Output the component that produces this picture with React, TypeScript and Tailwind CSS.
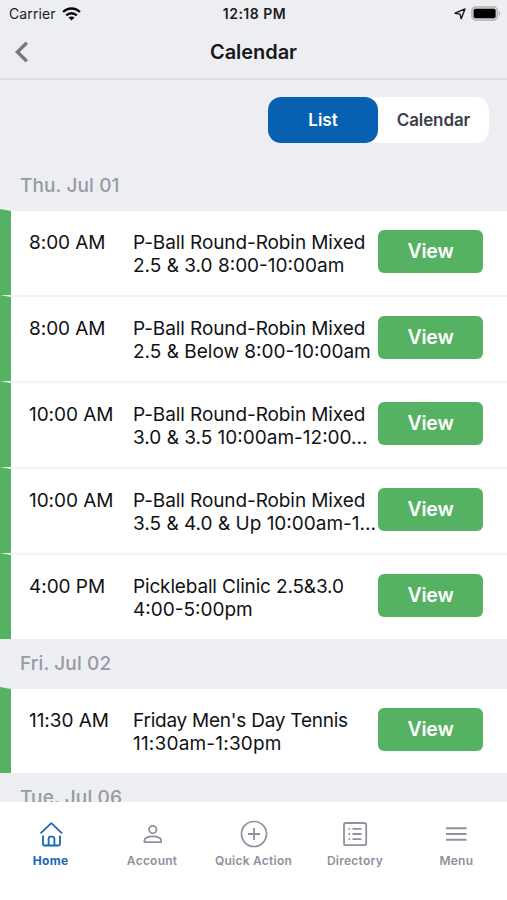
import type { ReactNode } from "react";

type EventLine = { text: string; tracking: string };
type Event = { time: string; lines: EventLine[] };
type Day = { label: string; events: Event[] };

const TIGHT = "tracking-[-0.09px]";
const TIGHTER = "tracking-[-0.16px]";
const TIGHTEST = "tracking-[-0.24px]";
const NORMAL = "tracking-normal";
const WIDE = "tracking-[0.2px]";

const MIXED: EventLine = { text: "P-Ball Round-Robin Mixed", tracking: TIGHT };

const DAYS: Day[] = [
  {
    label: "Thu. Jul 01",
    events: [
      { time: "8:00 AM", lines: [MIXED, { text: "2.5 & 3.0 8:00-10:00am", tracking: NORMAL }] },
      { time: "8:00 AM", lines: [MIXED, { text: "2.5 & Below 8:00-10:00am", tracking: NORMAL }] },
      { time: "10:00 AM", lines: [MIXED, { text: "3.0 & 3.5 10:00am-12:00...", tracking: NORMAL }] },
      { time: "10:00 AM", lines: [MIXED, { text: "3.5 & 4.0 & Up 10:00am-1...", tracking: NORMAL }] },
      {
        time: "4:00 PM",
        lines: [
          { text: "Pickleball Clinic 2.5&3.0", tracking: TIGHTER },
          { text: "4:00-5:00pm", tracking: NORMAL },
        ],
      },
    ],
  },
  {
    label: "Fri. Jul 02",
    events: [
      {
        time: "11:30 AM",
        lines: [
          { text: "Friday Men's Day Tennis", tracking: TIGHTEST },
          { text: "11:30am-1:30pm", tracking: WIDE },
        ],
      },
    ],
  },
  { label: "Tue. Jul 06", events: [] },
];

function StatusBar() {
  return (
    <div className="grid h-[27px] grid-cols-3 items-center pl-[9px] pr-[6px] text-[14px] text-[#1c1c1e]">
      <div className="flex items-center gap-[6px]">
        <span className="tracking-[0.1px]">Carrier</span>
        <svg width="19" height="14" viewBox="0 0 19 14" fill="none" stroke="#08080a" strokeWidth="2.4">
          <path d="M1.1 5C5.8.3 13.2.3 17.9 5" />
          <path d="M4.2 8.4c3-2.9 7.6-2.9 10.6 0" />
          <path d="M9.5 13.4 6.5 10.5c1.7-1.5 4.3-1.5 6 0z" fill="#08080a" stroke="none" />
        </svg>
      </div>
      <div className="pr-px pb-px text-center text-[14px] font-semibold tracking-[0.5px] whitespace-nowrap">
        12:18 PM
      </div>
      <div className="flex items-center justify-end gap-[5px]">
        <svg width="12" height="12" viewBox="0 0 12 12" fill="none" stroke="#1c1c1e" strokeWidth="1.4" strokeLinejoin="round">
          <path d="M11 1 7.2 10.7 6 6.1 1 5.2z" />
        </svg>
        <svg width="30" height="15" viewBox="0 0 30 15">
          <rect x="0.8" y="0.8" width="25.6" height="13.4" rx="4" fill="#d5d5d5" stroke="#b0b0b2" strokeWidth="1.2" />
          <rect x="2.6" y="2.8" width="22" height="9.4" rx="1.8" fill="#000" />
          <path d="M27.8 5.2c1.8.6 1.8 4 0 4.6z" fill="#b0b0b2" />
        </svg>
      </div>
    </div>
  );
}

function NavBar() {
  return (
    <header className="grid h-[53px] grid-cols-[60px_1fr_60px] items-center border-b-2 border-[#dfe0e3] pb-px">
      <svg className="ml-[14px]" width="16" height="24" viewBox="0 0 16 24" fill="none" stroke="#77787b" strokeWidth="3.4">
        <path d="M12.8 2.7 3.4 12l9.4 9.3" />
      </svg>
      <h1 className="text-center text-[20px] font-semibold tracking-[-0.05px] text-[#17181a]">Calendar</h1>
    </header>
  );
}

function ViewToggle() {
  return (
    <div className="flex justify-end pt-[17px] pr-[18px]">
      <div className="flex h-[46px] w-[221px] rounded-[13px] bg-white text-[17px] font-semibold">
        <button className="w-[110px] rounded-[13px] bg-[#0760b1] pt-px text-white">List</button>
        <button className="flex-1 pt-px tracking-[-0.1px] text-[#3c404a]">Calendar</button>
      </div>
    </div>
  );
}

function EventRow({ event, last }: { event: Event; last: boolean }) {
  return (
    <div className={`flex bg-white ${last ? "h-[84px]" : "h-[86px] border-b-2 border-[#f3f4f4]"}`}>
      {/* slanted top edge pokes over the divider above */}
      <div className="-mt-[2px] w-[11px] shrink-0 bg-[#56b263] [clip-path:polygon(0_0,100%_2px,100%_100%,0_100%)]" />
      <div className="w-[122px] shrink-0 pt-5 pl-[18px] text-[19px] leading-[23px] tracking-[-0.05px]">{event.time}</div>
      <div className="w-[245px] shrink-0 pt-5 text-[19px] leading-[23px] whitespace-nowrap">
        {event.lines.map((line) => (
          <div key={line.text} className={line.tracking}>
            {line.text}
          </div>
        ))}
      </div>
      <button className="mt-[19px] h-[43px] w-[105px] shrink-0 rounded-[6px] bg-[#56b263] text-[19.5px] font-semibold tracking-[-0.2px] text-white">
        View
      </button>
    </div>
  );
}

function Tab({ label, active, children }: { label: string; active?: boolean; children: ReactNode }) {
  return (
    <button className={`flex flex-1 basis-0 flex-col items-center pt-[17px] ${active ? "text-[#1767b4]" : "text-[#8e929b]"}`}>
      <svg width="30" height="30" viewBox="0 0 30 30" fill="none" stroke="currentColor" strokeWidth="1.8">
        {children}
      </svg>
      <span className={`mt-[4px] text-[12px] leading-[16px] whitespace-nowrap ${active ? "font-bold tracking-[0.35px]" : "font-semibold tracking-[0.25px]"}`}>
        {label}
      </span>
    </button>
  );
}

export default function App() {
  return (
    <div className="flex h-[900px] w-[507px] flex-col overflow-hidden bg-[#edeef2] font-[Inter,sans-serif] text-[#111214]">
      <StatusBar />
      <NavBar />
      <ViewToggle />
      <main className="min-h-0 flex-1 overflow-hidden pt-[18px]">
        {DAYS.map((day) => (
          <section key={day.label}>
            <h2 className="flex h-[50px] items-center pl-[20px] text-[19px] font-medium tracking-[0.12px] text-[#969aa5]">
              {day.label}
            </h2>
            {day.events.map((event, i) => (
              <EventRow key={i} event={event} last={i === day.events.length - 1} />
            ))}
          </section>
        ))}
      </main>
      <nav className="flex h-[98px] shrink-0 bg-white">
        <Tab label="Home" active>
          <path d="M5 13.8 15.3 4.2l10.3 9.6" strokeLinecap="round" />
          <path d="M7 16.5V25q0 1.500 1.500 1.500h14q1.500 0 1.500-1.500v-8.500M12.600 26.500v-6.700q0-2.200 2.200-2.200h1.400q2.200 0 2.200 2.200v6.700" />
        </Tab>
        <Tab label="Account">
          <circle cx="15.8" cy="10.6" r="3.7" />
          <path d="M7.5 23.2v-2.100c0-2.200 4-3.700 8.300-3.700s8.300 1.500 8.300 3.700v2.100z" strokeLinejoin="round" />
        </Tab>
        <Tab label="Quick Action">
          <circle cx="15" cy="15" r="12.5" strokeWidth="1.7" />
          <path d="M15 9v12M9 15h12" />
        </Tab>
        <Tab label="Directory">
          <rect x="4" y="4" width="22.2" height="22.2" rx="1.8" />
          <path d="M12.5 9.900h9M12.500 15h9M12.500 20.100h9" />
          <path d="M8.5 9.900h1.700M8.500 15h1.700M8.500 20.100h1.700" />
        </Tab>
        <Tab label="Menu">
          <path d="M5 9.300h20.500M5 15h20.500M5 20.700h20.500" strokeWidth="2.1" />
        </Tab>
      </nav>
    </div>
  );
}
